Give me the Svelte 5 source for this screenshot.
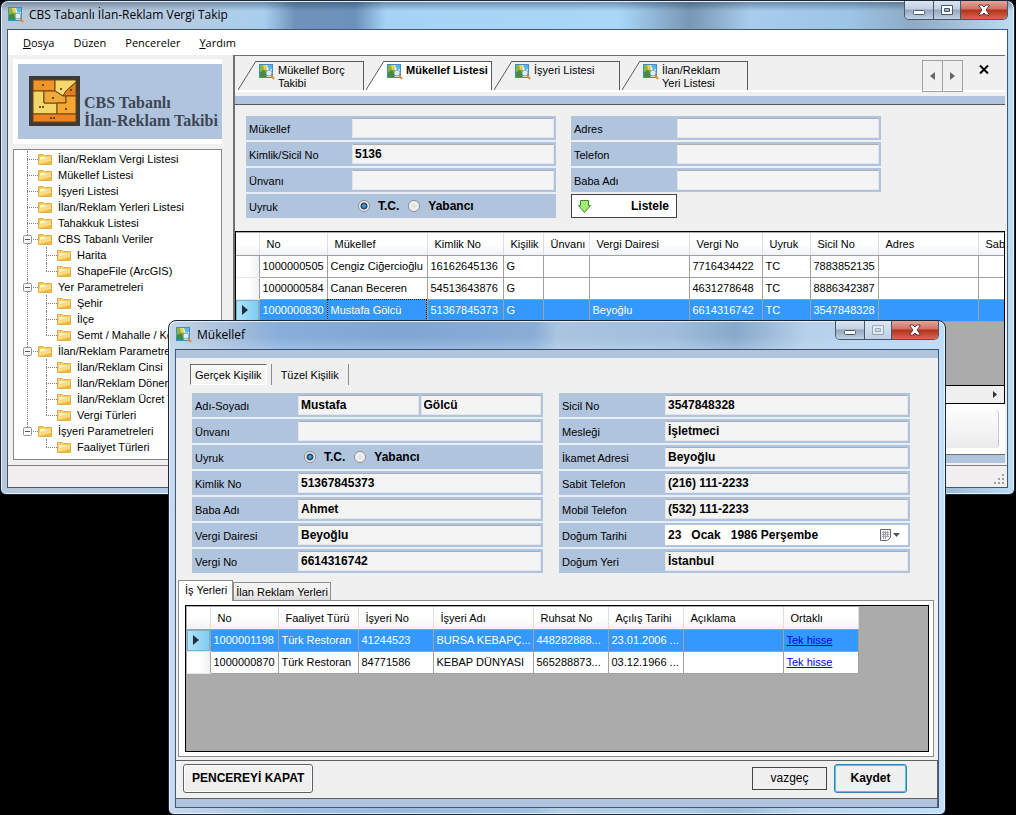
<script lang="ts">
	interface Column {
		label: string;
		width: number;
	}

	interface Node {
		label: string;
		children?: string[];
	}

	interface Field {
		label: string;
		id: string;
		values: string[];
		kind?: 'radio' | 'date';
	}

	const menu = [
		{ key: 'D', rest: 'osya' },
		{ key: '', rest: 'Düzen' },
		{ key: '', rest: 'Pencereler' },
		{ key: 'Y', rest: 'ardım' }
	];

	const tree: Node[] = [
		{ label: 'İlan/Reklam Vergi Listesi' },
		{ label: 'Mükellef Listesi' },
		{ label: 'İşyeri Listesi' },
		{ label: 'İlan/Reklam Yerleri Listesi' },
		{ label: 'Tahakkuk Listesi' },
		{ label: 'CBS Tabanlı Veriler', children: ['Harita', 'ShapeFile (ArcGIS)'] },
		{ label: 'Yer Parametreleri', children: ['Şehir', 'İlçe', 'Semt / Mahalle / Köy'] },
		{
			label: 'İlan/Reklam Parametreleri',
			children: ['İlan/Reklam Cinsi', 'İlan/Reklam Dönemi', 'İlan/Reklam Ücret Tarifesi', 'Vergi Türleri']
		},
		{ label: 'İşyeri Parametreleri', children: ['Faaliyet Türleri'] }
	];

	const tabs = ['Mükellef Borç Takibi', 'Mükellef Listesi', 'İşyeri Listesi', 'İlan/Reklam Yeri Listesi'];
	let activeTab = $state(1);

	const filterLeft: Field[] = [
		{ label: 'Mükellef', id: 'f-mukellef', values: [''] },
		{ label: 'Kimlik/Sicil No', id: 'f-kimlik', values: ['5136'] },
		{ label: 'Ünvanı', id: 'f-unvan', values: [''] },
		{ label: 'Uyruk', id: 'f-uyruk', values: [], kind: 'radio' }
	];

	const filterRight: Field[] = [
		{ label: 'Adres', id: 'f-adres', values: [''] },
		{ label: 'Telefon', id: 'f-telefon', values: [''] },
		{ label: 'Baba Adı', id: 'f-baba', values: [''] }
	];

	const personLeft: Field[] = [
		{ label: 'Adı-Soyadı', id: 'p-ad', values: ['Mustafa', 'Gölcü'] },
		{ label: 'Ünvanı', id: 'p-unvan', values: [''] },
		{ label: 'Uyruk', id: 'p-uyruk', values: [], kind: 'radio' },
		{ label: 'Kimlik No', id: 'p-kimlik', values: ['51367845373'] },
		{ label: 'Baba Adı', id: 'p-baba', values: ['Ahmet'] },
		{ label: 'Vergi Dairesi', id: 'p-daire', values: ['Beyoğlu'] },
		{ label: 'Vergi No', id: 'p-vergi', values: ['6614316742'] }
	];

	const personRight: Field[] = [
		{ label: 'Sicil No', id: 'p-sicil', values: ['3547848328'] },
		{ label: 'Mesleği', id: 'p-meslek', values: ['İşletmeci'] },
		{ label: 'İkamet Adresi', id: 'p-adres', values: ['Beyoğlu'] },
		{ label: 'Sabit Telefon', id: 'p-sabit', values: ['(216) 111-2233'] },
		{ label: 'Mobil Telefon', id: 'p-mobil', values: ['(532) 111-2233'] },
		{ label: 'Doğum Tarihi', id: 'p-tarih', values: ['23   Ocak   1986 Perşembe'], kind: 'date' },
		{ label: 'Doğum Yeri', id: 'p-yer', values: ['İstanbul'] }
	];

	const payerColumns: Column[] = [
		{ label: 'No', width: 68 },
		{ label: 'Mükellef', width: 100 },
		{ label: 'Kimlik No', width: 76 },
		{ label: 'Kişilik', width: 40 },
		{ label: 'Ünvanı', width: 46 },
		{ label: 'Vergi Dairesi', width: 100 },
		{ label: 'Vergi No', width: 73 },
		{ label: 'Uyruk', width: 48 },
		{ label: 'Sicil No', width: 68 },
		{ label: 'Adres', width: 100 },
		{ label: 'Sab', width: 100 }
	];

	const payers = [
		['1000000505', 'Cengiz Ciğercioğlu', '16162645136', 'G', '', '', '7716434422', 'TC', '7883852135', '', ''],
		['1000000584', 'Canan Beceren', '54513643876', 'G', '', '', '4631278648', 'TC', '8886342387', '', ''],
		['1000000830', 'Mustafa Gölcü', '51367845373', 'G', '', 'Beyoğlu', '6614316742', 'TC', '3547848328', '', '']
	];

	const placeColumns: Column[] = [
		{ label: 'No', width: 68 },
		{ label: 'Faaliyet Türü', width: 80 },
		{ label: 'İşyeri No', width: 75 },
		{ label: 'İşyeri Adı', width: 100 },
		{ label: 'Ruhsat No', width: 75 },
		{ label: 'Açılış Tarihi', width: 75 },
		{ label: 'Açıklama', width: 100 },
		{ label: 'Ortaklı', width: 75 }
	];

	const places = [
		['1000001198', 'Türk Restoran', '41244523', 'BURSA KEBAPÇ...', '448282888...', '23.01.2006 ...', '', 'Tek hisse'],
		['1000000870', 'Türk Restoran', '84771586', 'KEBAP DÜNYASI', '565288873...', '03.12.1966 ...', '', 'Tek hisse']
	];
</script>

{#snippet appIcon()}
	<svg class="app-icon" viewBox="0 0 16 16" width="16" height="16" aria-hidden="true">
		<rect x="0.5" y="0.5" width="13" height="13" fill="#e4f4fc" stroke="#3d8fc0" />
		<path d="M1 1h4l2 4 3 3-2 5H1z" fill="#8fb53a" />
		<path d="M4 1h3l1 4-3 1z" fill="#e6d34c" />
		<path d="M1 8l4-2 3 4-1 3H1z" fill="#4b8a3c" />
		<path d="M8 1h5v4l-3 1z" fill="#5fb4e4" />
		<circle cx="10" cy="9" r="3" fill="#d9effa" stroke="#7aa4c0" />
		<path d="M12 11l3 4" stroke="#d98b35" stroke-width="2" />
	</svg>
{/snippet}

{#snippet folder()}
	<svg class="folder" viewBox="0 0 14 12" width="14" height="12" aria-hidden="true">
		<path d="M0.5 1.5h5l1 1h7v9h-13z" fill="#f8d067" stroke="#e3ae48" />
		<path d="M2 4h10v4H2z" fill="#fff3c4" />
		<path d="M1 11V7l6-1 1-2h5v7z" fill="#fbdc86" />
		<path d="M1 11l12-3v3z" fill="#f2b93f" />
	</svg>
{/snippet}

{#snippet captionButtons(dimmed: boolean)}
	<div class="caption-buttons">
		<button class="min" aria-label="Simge durumuna küçült">
			<svg viewBox="0 0 12 12" width="12" height="12"><rect x="0.5" y="6.5" width="11" height="4" rx="1" fill="#fff" stroke="#4c5a6c" /></svg>
		</button>
		<button class="max" class:dimmed aria-label="Ekranı kapla">
			<svg viewBox="0 0 12 12" width="12" height="12"><path d="M0.5 1.5h11v9h-11zM3.5 4.5v3h5v-3z" fill="#fff" fill-rule="evenodd" stroke="#4c5a6c" /></svg>
		</button>
		<button class="close" aria-label="Kapat">
			<svg viewBox="0 0 12 12" width="12" height="12">
				<path d="M1 1h3l2 2 2-2h3v1L8 6l3 4v1H8L6 9l-2 2H1v-1l3-4-3-4z" fill="#fff" stroke="#60363a" />
			</svg>
		</button>
	</div>
{/snippet}

{#snippet fields(list: Field[])}
	{#each list as f}
		<div class="field">
			{#if f.kind === 'radio'}
				<span class="caption">{f.label}</span>
				<div class="radios">
					<label><input type="radio" name={f.id} checked />T.C.</label>
					<label><input type="radio" name={f.id} />Yabancı</label>
				</div>
			{:else}
				<label class="caption" for={f.id}>{f.label}</label>
				<div class="inputs" class:date={f.kind === 'date'}>
					{#each f.values as v, i}
						<input type="text" id={i ? `${f.id}-${i}` : f.id} value={v} aria-label={f.label} />
					{/each}
					{#if f.kind === 'date'}
						<button class="calendar" aria-label="Takvim">
							<svg viewBox="0 0 22 12" width="22" height="12">
								<path d="M0.5 0.5h10v8l-3 3h-7z" fill="#f4f4f6" stroke="#6a6570" />
								<path d="M2 3.5h7M2 5.5h7M2 7.5h7M3.5 2v8M5.5 2v8M7.5 2v6" stroke="#a6a6b0" />
								<path d="M13 4h7l-3.500 4z" fill="#46566c" />
							</svg>
						</button>
					{/if}
				</div>
			{/if}
		</div>
	{/each}
{/snippet}

{#snippet grid(columns: Column[], rows: string[][], current: number, focusCol: number)}
	<table style:width="{columns.reduce((w, c) => w + c.width, 23)}px">
		<colgroup>
			<col class="marker-col" />
			{#each columns as c}
				<col style:width="{c.width}px" />
			{/each}
		</colgroup>
		<thead>
			<tr>
				<th></th>
				{#each columns as c}
					<th>{c.label}</th>
				{/each}
			</tr>
		</thead>
		<tbody>
			{#each rows as row, r}
				<tr class:current={r === current}>
					<td class="marker">
						{#if r === current}
							<svg viewBox="0 0 6 10" width="6" height="10"><path d="M0 0l6 5-6 5z" fill="#1d3440" /></svg>
						{/if}
					</td>
					{#each row as cell, c}
						<td class:focused={r === current && c === focusCol}>
							{#if cell === 'Tek hisse'}<a href="#hisse">{cell}</a>{:else}{cell}{/if}
						</td>
					{/each}
				</tr>
			{/each}
		</tbody>
	</table>
{/snippet}

<main class="desktop">
	<section class="window main-window">
		<header class="title-bar">
			{@render appIcon()}
			<h1>CBS Tabanlı İlan-Reklam Vergi Takip</h1>
			{@render captionButtons(false)}
		</header>

		<div class="client">
			<nav class="menu">
				{#each menu as item}
					<button><u>{item.key}</u>{item.rest}</button>
				{/each}
			</nav>

			<div class="body">
				<aside>
					<div class="logo-frame">
						<div class="logo">
							<svg viewBox="0 0 51 50" width="51" height="50" aria-hidden="true">
								<rect width="51" height="50" fill="#3d3b38" />
								<rect x="4" y="4" width="43" height="42" fill="#e8902c" />
								<g stroke="#6a4412" stroke-width="1">
									<path d="M4 4h22v11H4z" fill="#f0952a" />
									<path d="M26 4h21v2L37 15l-3 5-8-5z" fill="#f6d86c" />
									<path d="M47 6v14H34l3-5z" fill="#e5801f" />
									<path d="M4 15h11v12h13v11H4z" fill="#f3d66a" />
									<path d="M15 15h11l8 5h3v7H15z" fill="#f0a93c" />
									<path d="M37 20h10v18H28V27h9z" fill="#f4a832" />
									<path d="M4 38h43v8H4z" fill="#ee8222" />
								</g>
								<g fill="#4a2a10">
									<circle cx="14" cy="9" r="1" /><circle cx="32" cy="13" r="1" /><circle cx="42" cy="14" r="1" />
									<circle cx="24" cy="22" r="1" /><circle cx="11" cy="31" r="1" /><circle cx="14" cy="31" r="1" />
									<circle cx="37" cy="33" r="1" /><circle cx="22" cy="42" r="1" /><circle cx="25" cy="42" r="1" />
								</g>
							</svg>
							<p>CBS Tabanlı<br />İlan-Reklam Takibi</p>
						</div>
					</div>

					<ul class="tree">
						{#each tree as node}
							<li>
								<div class="node">
									{#if node.children}
										<svg class="toggle" viewBox="0 0 9 9" width="9" height="9" aria-hidden="true">
											<rect x="0.5" y="0.5" width="8" height="8" rx="1" fill="#fff" stroke="#919191" />
											<path d="M2 4.5h5" stroke="#3c5a9a" />
										</svg>
									{/if}
									{@render folder()}<span>{node.label}</span>
								</div>
								{#if node.children}
									<ul>
										{#each node.children as child}
											<li><div class="node">{@render folder()}<span>{child}</span></div></li>
										{/each}
									</ul>
								{/if}
							</li>
						{/each}
					</ul>
				</aside>

				<div class="workspace">
					<div class="tab-strip">
						{#each tabs as tab, i}
							<button class="doc-tab" class:active={activeTab === i} onclick={() => (activeTab = i)}>
								<svg class="slant" viewBox="0 0 18 29" width="18" height="29" aria-hidden="true">
									<path d="M0 29L18 0v29z" fill={activeTab === i ? '#fff' : 'none'} />
									<path d="M0 29L18 0" stroke="#5a5a5a" fill="none" />
								</svg>
								<span class="tab-body">{@render appIcon()}<span>{tab}</span></span>
							</button>
						{/each}
						<div class="scrollers">
							<button aria-label="Önceki"><svg viewBox="0 0 5 8" width="5" height="8"><path d="M5 0v8L0 4z" fill="#666" /></svg></button>
							<button aria-label="Sonraki"><svg viewBox="0 0 5 8" width="5" height="8"><path d="M0 0v8l5-4z" fill="#666" /></svg></button>
						</div>
						<button class="close-tab" aria-label="Sekmeyi kapat">
							<svg viewBox="0 0 10 9" width="10" height="9"><path d="M1 0.500l8 8M9 0.500l-8 8" stroke="#000" stroke-width="2" /></svg>
						</button>
					</div>

					<div class="page">
						<div class="filters">
							<div class="form">{@render fields(filterLeft)}</div>
							<div class="form">
								{@render fields(filterRight)}
								<button class="list-button">
									<svg viewBox="0 0 13 13" width="13" height="13" aria-hidden="true">
										<path d="M2.500 0.500h8v5h2l-6 7-6-7h2z" fill="#a5ea74" stroke="#3b8a2c" />
									</svg>
									Listele
								</button>
							</div>
						</div>
						<div class="grid">
							{@render grid(payerColumns, payers, 2, 1)}
						</div>
						<div class="scrollbar">
							<svg viewBox="0 0 4 7" width="4" height="7"><path d="M0 0v7l4-3.500z" fill="#333" /></svg>
						</div>
						<div class="lower"><div></div></div>
					</div>
				</div>
			</div>

			<footer class="status">
				<svg viewBox="0 0 11 11" width="11" height="11" aria-hidden="true">
					<path d="M8 0h2v2h-2zM4 4h2v2H4zM8 4h2v2H8zM0 8h2v2H0zM4 8h2v2H4zM8 8h2v2H8z" fill="#a0a0a0" />
				</svg>
			</footer>
		</div>
	</section>

	<section class="window dialog">
		<header class="title-bar">
			{@render appIcon()}
			<h2>Mükellef</h2>
			{@render captionButtons(true)}
		</header>

		<div class="client">
			<div class="dialog-body">
				<div class="kinds">
					<button class="pressed">Gerçek Kişilik</button>
					<button>Tüzel Kişilik</button>
				</div>
				<div class="person">
					<div class="form">{@render fields(personLeft)}</div>
					<div class="form">{@render fields(personRight)}</div>
				</div>
				<div class="sub-tabs">
					<button class="active">İş Yerleri</button>
					<button>İlan Reklam Yerleri</button>
				</div>
				<div class="sub-page">
					<div class="grid">
						{@render grid(placeColumns, places, 0, -1)}
					</div>
				</div>
			</div>
			<footer class="actions">
				<button class="leave">PENCEREYİ KAPAT</button>
				<button class="cancel">vazgeç</button>
				<button class="save">Kaydet</button>
			</footer>
		</div>
	</section>
</main>

<style>
	:global(body) {
		background: #000;
	}

	* {
		box-sizing: border-box;
	}

	.desktop {
		position: relative;
		min-height: 815px;
		overflow: hidden;
		font: 11px/16px 'Liberation Sans', Arial, sans-serif;
		color: #000;
	}

	button {
		font: inherit;
		color: inherit;
		padding: 0;
		border: 0;
		background: none;
	}

	svg {
		display: block;
		flex-shrink: 0;
	}

	/* window frames */
	.window {
		position: absolute;
		display: flex;
		flex-direction: column;
		padding: 0 6px 6px;
		border: 1px solid #18263a;
		border-radius: 8px 8px 6px 6px;
		box-shadow: inset 0 0 0 1px #e2f1fd;
	}

	.main-window {
		top: 0;
		left: 0;
		right: 1px;
		min-height: 494px;
		background:
			linear-gradient(#0a1a3066, transparent 10px),
			linear-gradient(90deg, #b9c8d8 0, #b4cbe2 18%, #a8cfee 26%, #6f93bb 29%, #6c92bb 35%, #a5d3f5 38%, #a9d7f8 61%, #7797b4 68%, #a8cdec 74%, #9cc4e4 84%, #8eaac4 90%, #bcdcf4 100%);
	}

	.dialog {
		top: 320px;
		left: 168px;
		right: 70px;
		background:
			linear-gradient(transparent 16px, #cfe4f755 29px),
			linear-gradient(90deg, #c4d5e8 0, #a8bfda 8%, #88aedb 14%, #7fa6d2 30%, #89add7 47%, #a9c4df 50%, #a0bedc 65%, #88a9cb 73%, #b5d0e9 82%, #bcdcfa 100%);
	}

	.title-bar {
		display: flex;
		align-items: center;
		gap: 5px;
		height: 28px;
		padding-left: 1px;
	}

	h1,
	h2 {
		flex: 1;
		margin: 0;
		font: 12px/16px 'Open Sans', 'Noto Sans', sans-serif;
	}

	.caption-buttons {
		display: flex;
		align-self: flex-start;
		height: 19px;
		border: 1px solid #47566c;
		border-top: 0;
		border-radius: 0 0 5px 5px;
		overflow: hidden;
	}
	.caption-buttons button {
		display: grid;
		place-items: center;
		width: 28px;
		background: linear-gradient(#dbe6f0, #c0cfde 45%, #93a7bd 50%, #bfd2e4);
	}
	.caption-buttons .max {
		border: 1px solid #47566c;
		border-width: 0 1px;
	}
	.caption-buttons .dimmed {
		background: linear-gradient(#dbe8f4, #bdd0e3);
	}
	.caption-buttons .dimmed svg {
		opacity: 0.4;
	}
	.caption-buttons .close {
		width: 46px;
		background: linear-gradient(#e3a69b, #d0705f 45%, #b42f1c 50%, #d8694b);
	}

	.client {
		flex: 1;
		display: flex;
		flex-direction: column;
		border: 1px solid #3f5878;
		background: #f0f0f0;
	}

	/* main window */
	.menu {
		display: flex;
		gap: 19px;
		height: 25px;
		padding: 0 15px;
		background: #fff;
	}
	.menu button {
		font: 11px/24px 'Open Sans', 'Noto Sans', sans-serif;
	}

	.body {
		flex: 1;
		display: flex;
	}

	aside {
		flex: 0 0 225px;
		display: flex;
		flex-direction: column;
		gap: 5px;
		padding: 4px 11px 5px 5px;
	}

	.logo-frame {
		padding: 5px 0 5px 5px;
		background: #fff;
	}

	.logo {
		display: flex;
		gap: 4px;
		height: 75px;
		padding: 12px 0 0 11px;
		background: #b0c4de;
	}
	.logo p {
		margin: 18px 0 0;
		font: bold 16px/18px 'Liberation Serif', 'Times New Roman', serif;
		color: #3c4654;
		white-space: nowrap;
	}

	ul {
		margin: 0;
		padding: 0;
		list-style: none;
	}

	.tree {
		flex: 1;
		padding: 1px 0 4px 13px;
		border: 1px solid #828790;
		background: #fff;
		overflow: hidden;
	}
	.tree li {
		position: relative;
		padding-left: 11px;
	}
	.tree li::before,
	.tree li::after {
		content: '';
		position: absolute;
		left: 0;
		top: 0;
		border: 0 dotted #808080;
	}
	.tree li::before {
		height: 100%;
		border-left-width: 1px;
	}
	.tree li:last-child::before {
		height: 8px;
	}
	.tree li::after {
		top: 8px;
		width: 11px;
		border-top-width: 1px;
	}
	.tree li ul {
		padding-left: 8px;
	}
	.node {
		position: relative;
		display: flex;
		align-items: center;
		gap: 6px;
		height: 16px;
		white-space: nowrap;
	}
	.toggle {
		position: absolute;
		z-index: 1;
		left: -15px;
		top: 4px;
	}

	.workspace {
		flex: 1;
		display: flex;
		flex-direction: column;
		min-width: 0;
		margin: 0 2px 2px 0;
		border: solid #707070;
		border-width: 1px 0 0 2px;
	}

	.tab-strip {
		display: flex;
		height: 40px;
		padding: 5px 12px 0 3px;
		background: linear-gradient(#f0f0f0 34px, #fff 34px, #fff 36px, #f0f0f0 36px);
	}

	.doc-tab {
		display: flex;
		flex: 0 0 126px;
		height: 29px;
		margin-right: 2px;
		text-align: left;
		line-height: 13px;
	}
	.tab-body {
		display: flex;
		flex: 1;
		gap: 3px;
		padding: 2px 0 0 3px;
		height: 29px;
		border: solid #5a5a5a;
		border-width: 1px 1px 0 0;
	}
	.tab-body > span {
		flex: 1;
		padding-right: 12px;
	}
	.active .tab-body {
		background: #fff;
		font-weight: bold;
		white-space: nowrap;
	}
	.active .tab-body > span {
		padding-right: 0;
	}

	.scrollers {
		display: flex;
		height: 32px;
		margin: -1px 0 0 auto;
	}
	.scrollers button {
		display: grid;
		place-items: center;
		width: 21px;
		border: 1px solid #a0a0a0;
	}
	.scrollers button + button {
		margin-left: -1px;
	}

	.close-tab {
		align-self: flex-start;
		margin: 4px 4px 0 16px;
	}

	.page {
		flex: 1;
		display: flex;
		flex-direction: column;
		min-height: 0;
		border-top: 8px solid #b0c4de;
		border-bottom: 8px solid #b0c4de;
	}

	.filters {
		display: flex;
		gap: 15px;
		padding: 11px 12px 13px 11px;
		border-top: 1px solid #555;
	}
	.filters .form {
		flex: 0 1 310px;
	}

	.form {
		display: flex;
		flex-direction: column;
		gap: 2px;
		background: #e8eff8;
	}
	.filters .form:last-child {
		background: none;
	}

	.field {
		display: flex;
		height: 24px;
		padding: 2px 2px 2px 3px;
		background: #b0c4de;
	}
	.caption {
		flex: 0 0 103px;
		line-height: 22px;
	}
	.inputs {
		flex: 1;
		display: flex;
		gap: 2px;
		min-width: 0;
	}
	input[type='text'] {
		flex: 1;
		min-width: 0;
		padding: 0 2px;
		border: 1px solid #e2e6ec;
		border-top-color: #abadb3;
		background: #f4f4f4;
		font: bold 12px/16px 'Liberation Sans', Arial, sans-serif;
		color: #000;
	}
	.date {
		background: #fff;
	}
	.date input[type='text'] {
		border-color: #fff;
		background: #fff;
	}
	.calendar {
		padding: 0 6px 0 0;
	}

	.radios {
		display: flex;
		align-items: center;
		gap: 9px;
		padding-left: 6px;
		font: bold 12px/18px 'Liberation Sans', Arial, sans-serif;
	}
	.radios label {
		display: flex;
		align-items: center;
		gap: 8px;
	}
	input[type='radio'] {
		appearance: none;
		width: 12px;
		height: 12px;
		margin: 0;
		border: 1px solid #8e8f8f;
		border-radius: 50%;
		background: radial-gradient(#dcdcdc, #f4f4f4 60%);
	}
	input[type='radio']:checked {
		background: radial-gradient(circle, #58c0ea 0, #16446c 3px, #f4f4f4 4px);
	}

	.list-button {
		display: flex;
		align-items: center;
		justify-content: space-between;
		width: 106px;
		height: 24px;
		padding: 0 7px 0 6px;
		border: 1px solid #444;
		background: #fff;
		font-weight: bold;
		font-size: 12px;
	}

	.grid {
		flex: 1;
		min-height: 0;
		padding: 1px 0 0 1px;
		border: 1px solid #000;
		background: #ababab;
		overflow: hidden;
	}
	.page .grid {
		padding-left: 0;
	}

	table {
		table-layout: fixed;
		border-collapse: collapse;
		background: #fff;
	}
	.marker-col {
		width: 23px;
	}
	th {
		height: 22px;
		padding: 0 0 0 7px;
		border-right: 1px solid #dedfe1;
		border-bottom: 1px solid #a0a0a0;
		background: linear-gradient(#fff 50%, #f1f2f4);
		font-weight: normal;
		text-align: left;
		white-space: nowrap;
		overflow: hidden;
	}
	td {
		height: 22px;
		padding: 0 0 0 3px;
		border-right: 1px solid #a0a0a0;
		border-bottom: 1px solid #a0a0a0;
		white-space: nowrap;
		overflow: hidden;
	}
	.marker {
		padding-left: 6px;
		border-bottom-color: #e4e5e7;
		background: linear-gradient(90deg, #fff 50%, #f0f1f3);
	}
	.current td {
		background: #3399ff;
		color: #fff;
	}
	.current .marker {
		background: linear-gradient(90deg, #b4e2f7, #7ccbf1);
		box-shadow: inset 0 0 0 1px #6db4d6;
	}
	.current .focused {
		outline: 1px dotted #2a1200;
		outline-offset: -1px;
	}
	a {
		color: #0000ee;
	}

	.scrollbar {
		display: flex;
		align-items: center;
		justify-content: flex-end;
		height: 18px;
		padding-right: 7px;
		border: 1px solid #000;
		border-top: 0;
		background: #f0f0f0;
	}

	.lower {
		height: 51px;
		padding: 6px;
		border-bottom: 1px solid #707070;
		background: #fff;
	}
	.lower div {
		height: 38px;
		border-right: 1px solid #c8c8c8;
		border-radius: 4px;
		background: linear-gradient(#fdfdfd, #ebebeb);
	}

	.status {
		display: flex;
		align-items: flex-end;
		justify-content: flex-end;
		height: 22px;
		padding: 0 2px 2px;
		border-top: 1px solid #808080;
		background: #f1eff0;
	}

	/* dialog */
	.dialog .client {
		border-top-color: #3a4f70;
	}

	.dialog-body {
		padding: 6px 4px 3px 2px;
		border-top: 8px solid #b0c4de;
	}

	.kinds {
		display: flex;
		height: 21px;
		margin-left: 12px;
	}
	.kinds button {
		padding: 0 9px;
		border-right: 1px solid #8c8c8c;
	}
	.kinds .pressed {
		margin-right: 5px;
		padding: 0 4px;
		border: 1px solid #fff;
		border-top-color: #6c6c6c;
		border-left-color: #6c6c6c;
		background: #f8f8f8;
		box-shadow: 4px 0 0 #f0f0f0, 5px 0 0 #8c8c8c;
	}

	.person {
		display: flex;
		gap: 16px;
		padding: 8px 24px 7px 14px;
	}
	.person .form {
		flex: 1;
		min-width: 0;
	}

	.sub-tabs {
		display: flex;
		align-items: flex-end;
		height: 20px;
	}
	.sub-tabs button {
		height: 18px;
		padding: 0 2px;
		border: 1px solid #8c8e94;
		border-bottom: 0;
		background: linear-gradient(#f2f2f2 50%, #dadada);
	}
	.sub-tabs .active {
		position: relative;
		height: 21px;
		margin-bottom: -1px;
		padding: 0 5px 3px 6px;
		background: #fff;
	}

	.sub-page {
		display: flex;
		height: 157px;
		padding: 4px 4px 4px 6px;
		border: 1px solid #8c8e94;
		background: #fff;
	}

	.actions {
		display: flex;
		align-items: center;
		gap: 7px;
		height: 47px;
		padding: 0 30px 12px 7px;
		border: solid #606060;
		border-width: 1px 1px 0 0;
		background: linear-gradient(#f0f0f0 37px, #606060 37px, #606060 38px, #b0c4de 38px);
	}
	.actions button {
		height: 29px;
		border: 1px solid #606060;
		border-radius: 3px;
		font-size: 12px;
		font-weight: bold;
	}
	.actions .leave {
		margin-right: auto;
		padding: 0 8px;
		background: linear-gradient(#f4f4f4, #ececec);
		box-shadow: inset 0 0 0 1px #fcfcfc;
	}
	.actions .cancel {
		width: 75px;
		height: 23px;
		border-color: #444;
		border-radius: 0;
		font-weight: normal;
	}
	.actions .save {
		width: 73px;
		border-color: #3c7fb1;
		box-shadow: inset 0 0 0 1px #48c8ea;
	}
</style>
